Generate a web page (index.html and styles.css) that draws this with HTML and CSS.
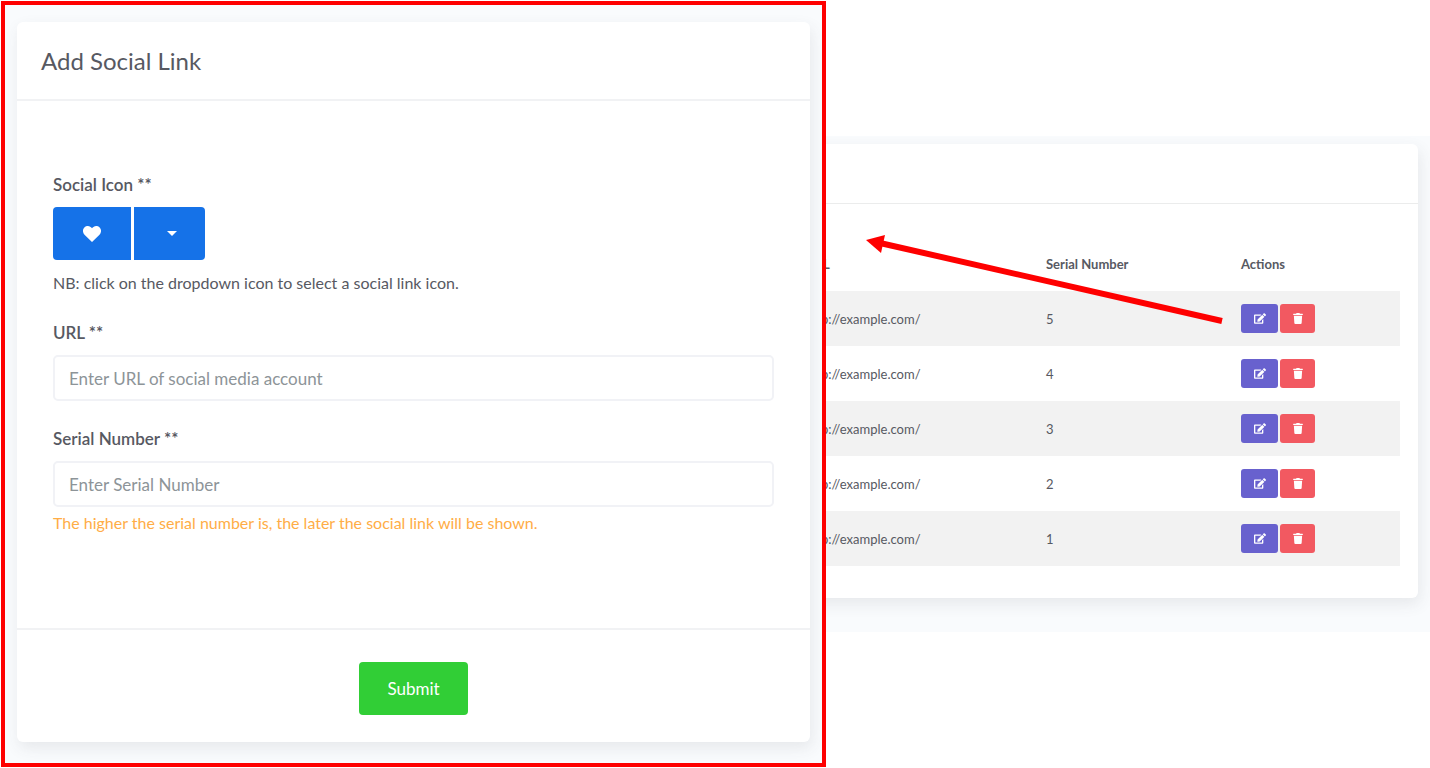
FILE: index.html
```html
<!DOCTYPE html>
<html lang="en">
<head>
  <meta charset="UTF-8">
  <meta name="viewport" content="width=device-width, initial-scale=1.0">
  <title>Social Links</title>
  <link rel="stylesheet" href="styles.css">
</head>
<body>
  <!-- shared icons -->
  <svg class="sprite" aria-hidden="true">
    <symbol id="icon-edit" viewBox="0 0 576 512">
      <path d="M402.600 83.200l90.200 90.200c3.800 3.800 3.800 10 0 13.800L274.400 405.600l-92.800 10.300c-12.400 1.400-22.900-9.100-21.500-21.500l10.300-92.800L388.800 83.200c3.800-3.800 10-3.800 13.800 0zm162-22.900l-48.800-48.800c-15.200-15.200-39.900-15.200-55.200 0l-35.400 35.400c-3.800 3.800-3.800 10 0 13.800l90.200 90.200c3.800 3.800 10 3.800 13.800 0l35.400-35.400c15.200-15.300 15.200-40 0-55.200zM384 346.200V448H64V128h229.800c3.200 0 6.200-1.300 8.500-3.500l40-40c7.600-7.600 2.200-20.500-8.500-20.500H48C21.500 64 0 85.500 0 112v352c0 26.500 21.500 48 48 48h352c26.500 0 48-21.500 48-48V306.200c0-10.700-12.900-16-20.500-8.500l-40 40c-2.200 2.300-3.500 5.300-3.500 8.500z"/>
    </symbol>
    <symbol id="icon-trash" viewBox="0 0 448 512">
      <path d="M432 32H312l-9.400-18.700A24 24 0 0 0 281.100 0H166.800a23.700 23.700 0 0 0-21.400 13.300L136 32H16A16 16 0 0 0 0 48v32a16 16 0 0 0 16 16h416a16 16 0 0 0 16-16V48a16 16 0 0 0-16-16zM53.200 467a48 48 0 0 0 47.900 45h245.800a48 48 0 0 0 47.900-45L416 128H32z"/>
    </symbol>
  </svg>

  <div class="container">
    <div class="form-panel">
      <form class="card form-card">
        <div class="card-header">
          <h1>Add Social Link</h1>
        </div>
        <div class="card-body">
          <div class="form-group">
            <label id="iconLabel" for="iconBtn">Social Icon **</label>
            <div class="btn-group">
              <button type="button" class="btn-primary icon-btn" id="iconBtn">
                <svg class="heart" viewBox="0 0 18 16" aria-hidden="true"><path d="M9 16L1.500 8.700C-.6 6.500-.5 3 1.600 1.200 3.600-.6 6.500-.3 8.300 1.500L9 2.200l.7-.7c1.800-1.800 4.700-2.100 6.700-.3 2.100 1.800 2.200 5.300.1 7.500z"/></svg>
              </button>
              <button type="button" class="btn-primary caret-btn" aria-label="Select icon">
                <span class="caret"></span>
              </button>
            </div>
            <p class="note">NB: click on the dropdown icon to select a social link icon.</p>
          </div>
          <div class="form-group">
            <label for="url">URL **</label>
            <input type="text" id="url" name="url" placeholder="Enter URL of social media account">
          </div>
          <div class="form-group">
            <label for="serial">Serial Number **</label>
            <input type="text" id="serial" name="serial_number" placeholder="Enter Serial Number">
            <p class="warning">The higher the serial number is, the later the social link will be shown.</p>
          </div>
        </div>
        <div class="card-footer">
          <button type="submit" class="submit-btn">Submit</button>
        </div>
      </form>
    </div>

    <div class="list-panel">
      <div class="card list-card">
        <div class="list-header"></div>
        <table>
          <thead>
            <tr>
              <th>URL</th>
              <th class="serial-col">Serial Number</th>
              <th class="actions-col">Actions</th>
            </tr>
          </thead>
          <tbody id="linksTableBody"></tbody>
        </table>
      </div>
      <svg class="arrow" viewBox="0 0 360 92" aria-hidden="true">
        <path d="M14 7L356 85" stroke="#fe0000" stroke-width="6"/>
        <path d="M0 4L19 -1L15 17Z" fill="#fe0000"/>
      </svg>
    </div>
  </div>

  <script>
    const links = [5, 4, 3, 2, 1].map(serial => ({ url: "http://example.com/", serial }));

    const tableBody = document.getElementById('linksTableBody');
    links.forEach(link => {
      const row = tableBody.insertRow();
      row.insertCell(0).textContent = link.url;
      row.insertCell(1).textContent = link.serial;
      row.insertCell(2).innerHTML = `
        <div class="actions">
          <button type="button" class="action-btn edit-btn" aria-label="Edit"><svg><use href="#icon-edit"/></svg></button>
          <button type="button" class="action-btn delete-btn" aria-label="Delete"><svg><use href="#icon-trash"/></svg></button>
        </div>`;
    });
  </script>
</body>
</html>
```
FILE: styles.css
```css
:root {
  --primary-color: #1572e8;
  --success-color: #31ce36;
  --warning-color: #ffad46;
  --danger-color: #f25961;
  --secondary-color: #6861ce;
  --background-color: #f9fbfd;
  --text-color: #575962;
}

* {
  box-sizing: border-box;
}

body {
  font-family: Lato, 'Open Sans', sans-serif;
  font-size: 17px;
  line-height: 24px;
  margin: 0;
  background-color: white;
  color: var(--text-color);
}

button, input {
  font-family: inherit;
  font-size: inherit;
}

.sprite {
  display: none;
}

.container {
  display: grid;
  grid-template-columns: minmax(0, 825fr) minmax(0, 604fr);
  align-items: start;
  padding: 1px 0 1px 1px;
  overflow: hidden;
}

.card {
  background-color: white;
  border-radius: 6px;
  box-shadow: 2px 6px 15px rgba(69, 65, 78, 0.1);
}

.form-panel {
  position: relative;
  z-index: 1;
  border: 4px solid #fe0000;
  background-color: var(--background-color);
  padding: 17px 12px 21px;
}

.card-header {
  padding: 24px 24px 23px;
  border-bottom: 2px solid #f1f2f4;
}

.card-header h1 {
  margin: 0;
  font-size: 24px;
  font-weight: 400;
  line-height: 30px;
}

.card-body {
  padding: 72px 36px 93px;
}

.form-group + .form-group {
  margin-top: 26px;
}

.form-group label {
  display: block;
  margin-bottom: 10px;
  font-weight: 600;
}

.form-group p {
  margin: 0;
  font-size: 16px;
}

.form-group .note {
  margin-top: 11px;
}

.form-group .warning {
  margin-top: 4px;
  color: var(--warning-color);
}

.form-group input {
  display: block;
  width: 100%;
  height: 46px;
  padding: 0 14px;
  border: 2px solid #f1f2f6;
  border-radius: 5px;
  color: var(--text-color);
}

.form-group input::placeholder {
  color: #8d9498;
}

.btn-group {
  display: flex;
  gap: 3px;
}

.btn-primary {
  display: flex;
  align-items: center;
  justify-content: center;
  height: 53px;
  padding: 0;
  border: none;
  background-color: var(--primary-color);
  cursor: pointer;
}

.icon-btn {
  width: 78px;
  border-radius: 4px 0 0 4px;
}

.caret-btn {
  width: 71px;
  padding-left: 4px;
  border-radius: 0 4px 4px 0;
}

.heart {
  width: 18px;
  height: 16px;
  fill: white;
}

.caret {
  border: 5px solid transparent;
  border-top-color: white;
  border-bottom: none;
}

.card-footer {
  padding: 32px 24px 27px;
  border-top: 2px solid #f1f2f4;
  text-align: center;
}

.submit-btn {
  height: 53px;
  padding: 0 28px;
  border: none;
  border-radius: 4px;
  background-color: var(--success-color);
  color: white;
  cursor: pointer;
}

/* the list continues underneath the form panel */
.list-panel {
  position: relative;
  margin-top: 135px;
  padding: 8px 12px 34px 0;
  background-color: var(--background-color);
}

.list-card {
  margin-left: -64px;
  padding-bottom: 32px;
}

.list-header {
  height: 60px;
  border-bottom: 1px solid #ebecec;
}

table {
  width: calc(100% - 36px);
  margin: 0 18px;
  padding-top: 32px;
  table-layout: fixed;
  border-spacing: 0;
  font-size: 13px;
}

th, td {
  height: 55px;
  padding: 0 25px;
  text-align: left;
}

.serial-col {
  width: 195px;
}

.actions-col {
  width: 184px;
}

tbody tr:nth-child(odd) {
  background-color: #f2f2f2;
}

.actions {
  display: flex;
  gap: 2px;
}

.action-btn {
  display: flex;
  align-items: center;
  justify-content: center;
  height: 29px;
  padding: 0;
  border: none;
  border-radius: 3px;
  cursor: pointer;
}

.action-btn svg {
  width: 12px;
  height: 11px;
  fill: white;
}

.edit-btn {
  width: 37px;
  background-color: var(--secondary-color);
}

.delete-btn {
  width: 35px;
  background-color: var(--danger-color);
}

.arrow {
  position: absolute;
  top: 100px;
  left: 40px;
  width: 360px;
  height: 92px;
  overflow: visible;
}
```
